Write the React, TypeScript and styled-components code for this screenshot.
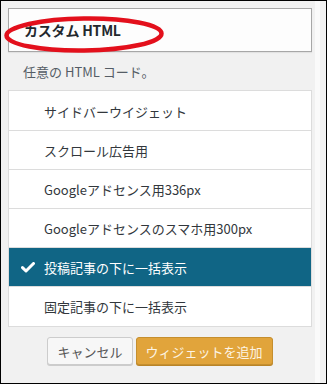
import React from "react";
import styled, { createGlobalStyle } from "styled-components";

const GlobalStyle = createGlobalStyle`
  html, body {
    margin: 0;
    padding: 0;
    background: #f1f1f1;
  }
  * {
    box-sizing: border-box;
  }
`;

const Frame = styled.div`
  width: 327px;
  height: 384px;
  border: 1px solid #000;
  background: #f1f1f1;
  display: flex;
  font-family: "Noto Sans CJK JP", "Noto Sans", sans-serif;
  overflow: hidden;
`;

const Main = styled.div`
  width: 311px;
  padding: 7px 0 0 7px;
  display: flex;
  flex-direction: column;
`;

const Track = styled.div`
  flex: 1;
  background: linear-gradient(
    to right,
    #f1f1f1 0,
    #f1f1f1 3px,
    #fafafa 3px,
    #fafafa 8px,
    #f1f1f1 8px
  );
`;

const Header = styled.div`
  position: relative;
  height: 44px;
  border: 1px solid #a7a7a7;
  background: #fdfdfd;
  box-shadow: 0 1px 1px rgba(0, 0, 0, 0.06);
  display: flex;
  align-items: center;
  padding-left: 15px;
`;

const Title = styled.h3`
  margin: 0;
  font-size: 14px;
  font-weight: 700;
  color: #23282d;
  letter-spacing: -0.2px;
`;

const Circle = styled.svg`
  position: absolute;
  left: -6px;
  top: 5px;
  pointer-events: none;
`;

const Description = styled.p`
  margin: 10px 0 8px;
  padding-left: 15px;
  height: 20px;
  line-height: 20px;
  font-size: 13px;
  color: #555d66;
`;

const List = styled.ul`
  margin: 0;
  padding: 1px 0;
  list-style: none;
  background: #fff;
  border: 1px solid #dcdcdc;
`;

const Row = styled.li<{ $selected?: boolean }>`
  position: relative;
  height: 38px;
  display: flex;
  align-items: center;
  padding-left: 35px;
  font-size: 13px;
  color: ${(p) => (p.$selected ? "#fff" : "#32373c")};
  background: ${(p) => (p.$selected ? "#106585" : "#fff")};
  & + & {
    border-top: 1px solid #dcdcdc;
    height: 39px;
  }
`;

const Check = styled.svg`
  position: absolute;
  left: 12px;
  top: 50%;
  margin-top: -5px;
`;

const Actions = styled.div`
  display: flex;
  justify-content: center;
  gap: 3px;
  margin-top: 10px;
`;

const Button = styled.button<{ $primary?: boolean }>`
  height: 28px;
  padding: 0 9px;
  font-family: inherit;
  font-size: 13px;
  border-radius: 3px;
  border: 1px solid ${(p) => (p.$primary ? "#c58f2f" : "#cccccc")};
  background: ${(p) => (p.$primary ? "#e1a43b" : "#f7f7f7")};
  color: ${(p) => (p.$primary ? "#fdf4e4" : "#555")};
  box-shadow: ${(p) =>
    p.$primary ? "0 1px 0 #b98428" : "0 1px 0 #cccccc"};
  cursor: pointer;
`;

const options = [
  "サイドバーウイジェット",
  "スクロール広告用",
  "Googleアドセンス用336px",
  "Googleアドセンスのスマホ用300px",
  "投稿記事の下に一括表示",
  "固定記事の下に一括表示",
];

const selectedIndex = 4;

export default function App() {
  return (
    <>
      <GlobalStyle />
      <Frame>
        <Main>
          <Header>
            <Title>カスタム HTML</Title>
            <Circle width="162" height="40" viewBox="0 0 162 40">
              <ellipse
                cx="81"
                cy="20.5"
                rx="77.5"
                ry="16"
                fill="none"
                stroke="#e3101c"
                strokeWidth="4.5"
                transform="rotate(-0.8 81 20)"
              />
            </Circle>
          </Header>
          <Description>任意の HTML コード。</Description>
          <List>
            {options.map((label, i) => (
              <Row key={label} $selected={i === selectedIndex}>
                {i === selectedIndex && (
                  <Check width="14" height="11" viewBox="0 0 14 11">
                    <path
                      d="M1.5 5.6 L5 9 L12.5 1.5"
                      fill="none"
                      stroke="#fff"
                      strokeWidth="3"
                      strokeLinecap="round"
                      strokeLinejoin="round"
                    />
                  </Check>
                )}
                {label}
              </Row>
            ))}
          </List>
          <Actions>
            <Button>キャンセル</Button>
            <Button $primary>ウィジェットを追加</Button>
          </Actions>
        </Main>
        <Track />
      </Frame>
    </>
  );
}
